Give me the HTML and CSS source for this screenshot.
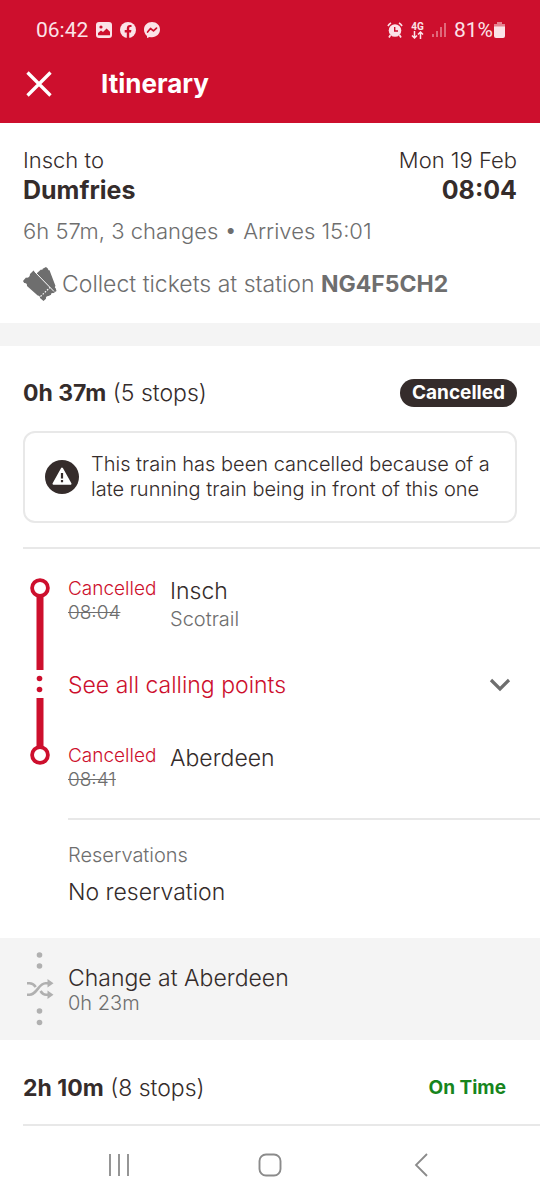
FILE: index.html
```html
<!DOCTYPE html>
<html lang="en">
<head>
<meta charset="utf-8">
<meta name="viewport" content="width=device-width, initial-scale=1">
<title>Itinerary</title>
<link rel="stylesheet" href="styles.css">
</head>
<body>
<header class="top">
  <div class="status">
    <div class="status-group">
      <span>06:42</span>
      <svg class="status-icon" viewBox="0 0 16 16" aria-hidden="true"><rect width="16" height="16" rx="3" fill="#fbe3e8"/><circle cx="5" cy="5" r="1.6" fill="#cd0f2d"/><path d="M2 13.2V11l3-2.5 2 1.6 3.6-3.6L14 9.8v3.4z" fill="#cd0f2d"/></svg>
      <svg class="status-icon" viewBox="0 0 16 16" aria-hidden="true"><circle cx="8" cy="8" r="8" fill="#fbe3e8"/><path d="M6.8 16v-5.6H4.7V8.1h2.1V6.4c0-2.2 1.3-3.4 3.2-3.4.7 0 1.500.1 1.500.1v2h-1c-1 0-1.300.6-1.300 1.300v1.700h2.200l-.4 2.300H9.200V16z" fill="#cd0f2d"/></svg>
      <svg class="status-icon" viewBox="0 0 16 16" aria-hidden="true"><path d="M8 0c4.600 0 8 3.300 8 7.600s-3.400 7.600-8 7.600c-.8 0-1.600-.1-2.300-.3L3 16v-2C1.100 12.500 0 10.200 0 7.600 0 3.300 3.400 0 8 0z" fill="#fbe3e8"/><path d="M3.600 10l2.900-3.500 3 2.300 3-2.700" fill="none" stroke="#cd0f2d" stroke-width="1.700" stroke-linejoin="round" stroke-linecap="round"/></svg>
    </div>
    <div class="status-group">
      <svg class="status-icon" viewBox="0 0 16 16" aria-hidden="true"><path d="M1 4a7 7 0 0 1 3-3M15 4a7 7 0 0 0-3-3M3.500 13L2 15.500M12.500 13l1.500 2.500" stroke="#fbe3e8" stroke-width="1.700" fill="none"/><circle cx="8" cy="8.500" r="6.300" fill="#fbe3e8"/><path d="M7.700 5v4H11" fill="none" stroke="#cd0f2d" stroke-width="1.400"/></svg>
      <span class="network"><span>4G</span>
        <svg class="arrows" viewBox="0 0 13 8" aria-hidden="true"><path d="M3.500 0v7M1 4.500L3.500 7 6 4.500M9.500 8V1M7 3.500L9.500 1 12 3.500" fill="none" stroke="#fbe3e8" stroke-width="1.500"/></svg>
      </span>
      <svg class="signal" viewBox="0 0 14 14" aria-hidden="true"><path d="M1 11v3M5 8v6M9 4v10M13 0v14" stroke="#e5808f" stroke-width="1.600"/></svg>
      <span class="battery"><span>81%</span>
        <svg class="cell" viewBox="0 0 11 16" aria-hidden="true"><path d="M3 0h5v2h3v3H0V2h3z" fill="#e5808f"/><path d="M0 4.500h11V14a2 2 0 0 1-2 2H2a2 2 0 0 1-2-2z" fill="#fbe3e8"/></svg>
      </span>
    </div>
  </div>
  <div class="bar">
    <button class="icon-button" type="button" aria-label="Close"><svg width="26" height="26" viewBox="0 0 26 26" aria-hidden="true"><path d="M1.500 1.500l23 23M24.500 1.500l-23 23" stroke="#fff" stroke-width="3.300"/></svg></button>
    <h1 class="title">Itinerary</h1>
  </div>
</header>

<main>
  <section class="summary">
    <div class="row"><span>Insch to</span><span>Mon 19 Feb</span></div>
    <div class="row strong"><span>Dumfries</span><span>08:04</span></div>
    <p class="duration">6h 57m, 3 changes • Arrives 15:01</p>
    <p class="collect">
      <svg class="tickets" viewBox="0 0 34 34" aria-hidden="true"><path d="M13.500 6.500L18 2.500c.6.700 1.800.2 1.700-.8L23 0l2 1.700c0 1 .5 1.700 1.500 1.500L32.500 19c-.8.6-.8 1.700.2 2.200L33.500 24l-3 2z" fill="#6e6e6e"/><path d="M0 14l3-3.500c1.800.8 4.200-.7 4-3.500L10.500 3.500 31.500 25l-1.500 1.200c-1.300-.4-2.200.4-1.900 1.600L25.500 29c-1.600-.2-3 1-2.500 2.800L20.500 34 17 31c.2-1.400-.8-2.500-2.300-2.500L4 19c.3-2-1-3.300-2.800-3z" fill="#6e6e6e"/><path d="M11.500 4.500L31 24.500" stroke="#fff" stroke-width="1"/><path d="M17.500 29.500L27 20.500" stroke="#fff" stroke-width="1.200" stroke-dasharray="1.600 1.400"/></svg>
      <span>Collect tickets at station <b>NG4F5CH2</b></span>
    </p>
  </section>

  <section class="leg">
    <div class="leg-head">
      <h2><b>0h 37m</b> (5 stops)</h2>
      <span class="pill">Cancelled</span>
    </div>
    <div class="notice" role="alert">
      <svg class="warning" viewBox="0 0 34 34" aria-hidden="true"><circle cx="17" cy="17" r="17" fill="#352c2b"/><path d="M17 8.500l8.500 15.300h-17z" fill="#fff" stroke="#fff" stroke-width="2" stroke-linejoin="round"/><path d="M17 13v5.500M17 20v2.300" stroke="#352c2b" stroke-width="2.200"/></svg>
      <p>This train has been cancelled because of a late running train being in front of this one</p>
    </div>
  </section>

  <section class="journey">
    <svg class="rail" viewBox="0 0 20 188" aria-hidden="true"><path d="M10 16v77M10 121v50" stroke="#cd0f2d" stroke-width="7"/><g fill="#fff" stroke="#cd0f2d" stroke-width="3.800"><circle cx="10" cy="11" r="7.900"/><circle cx="10" cy="178" r="7.900"/></g><g fill="#cd0f2d"><circle cx="9.500" cy="101.500" r="2.800"/><circle cx="9.500" cy="112.500" r="2.800"/></g></svg>
    <div class="stops">
      <div class="stop">
        <div class="when"><span class="late">Cancelled</span><s>08:04</s></div>
        <div class="where"><span>Insch</span><small>Scotrail</small></div>
      </div>
      <button class="expand" type="button" aria-expanded="false"><span>See all calling points</span><svg width="22" height="14" viewBox="0 0 22 14" aria-hidden="true"><path d="M2 2l9 9 9-9" fill="none" stroke="#6e6e6e" stroke-width="3.200"/></svg></button>
      <div class="stop">
        <div class="when"><span class="late">Cancelled</span><s>08:41</s></div>
        <div class="where"><span>Aberdeen</span></div>
      </div>
      <div class="reservations">
        <h3>Reservations</h3>
        <p>No reservation</p>
      </div>
    </div>
  </section>

  <section class="change">
    <svg class="shuffle" viewBox="0 0 28 76" aria-hidden="true"><g fill="#b0b0b0"><circle cx="13.500" cy="4" r="2.800"/><circle cx="13.500" cy="15" r="2.800"/><circle cx="13.500" cy="60" r="2.800"/><circle cx="13.500" cy="71.500" r="2.800"/><path d="M21.500 28l6 4.300-6 4.200zM21.500 39.500l6 4.300-6 4.200z"/></g><path d="M1 32.300h2.500c3.500 0 5 2 6.300 3.700M1 43.800h2.500c7.500 0 9-11.500 16-11.500H23M14.500 40c1.300 2 2.800 3.800 5.500 3.800h3" fill="none" stroke="#b0b0b0" stroke-width="2.600"/></svg>
    <div class="change-text"><span>Change at Aberdeen</span><small>0h 23m</small></div>
  </section>

  <section class="leg-head next">
    <h2><b>2h 10m</b> (8 stops)</h2>
    <span class="on-time">On Time</span>
  </section>
</main>

<nav class="system" aria-label="System">
  <button class="icon-button" type="button" aria-label="Recent apps"><svg width="24" height="24" viewBox="0 0 24 24" aria-hidden="true"><path d="M3 1v22M12 1v22M21 1v22" stroke="#8b8b8b" stroke-width="1.800"/></svg></button>
  <button class="icon-button" type="button" aria-label="Home"><svg width="24" height="24" viewBox="0 0 24 24" aria-hidden="true"><rect x="1.500" y="1.500" width="21" height="21" rx="6.500" fill="none" stroke="#8b8b8b" stroke-width="1.900"/></svg></button>
  <button class="icon-button" type="button" aria-label="Back"><svg width="24" height="24" viewBox="0 0 24 24" aria-hidden="true"><path d="M18 1L7 12l11 11" fill="none" stroke="#8b8b8b" stroke-width="1.800"/></svg></button>
</nav>
</body>
</html>
```
FILE: styles.css
```css
* { box-sizing: border-box; }
body {
  margin: 0;
  background: #fff;
  color: #352c2b;
  font: 300 22px/28px Inter, "Noto Sans", sans-serif;
}
h1, h2, h3, p { margin: 0; font-weight: inherit; font-size: inherit; }
b { font-weight: 700; }
svg { display: block; flex: none; }
button {
  border: 0;
  padding: 0;
  background: none;
  font: inherit;
  color: inherit;
  cursor: pointer;
}

.top { background: #cd0f2d; color: #fff; padding-bottom: 21px; }
.status {
  display: flex;
  justify-content: space-between;
  padding: 18px 35px 0 36px;
  color: #fbe3e8;
  font: 400 21px/24px Roboto, sans-serif;
}
.status-group { display: flex; align-items: center; gap: 8px; }
.status-icon { width: 16px; height: 16px; }
.network {
  display: flex;
  flex-direction: column;
  align-items: center;
  font-size: 10px;
  font-weight: 700;
  line-height: 9px;
}
.arrows { width: 13px; height: 8px; }
.signal { width: 14px; height: 14px; }
.battery { display: flex; align-items: center; gap: 1px; }
.cell { width: 11px; height: 16px; }
.bar { display: flex; align-items: center; gap: 49px; padding: 24px 26px 0; }
.title { font-weight: 700; font-size: 26px; line-height: 36px; }

.summary { padding: 23px 23px 22px; border-bottom: 23px solid #f4f4f4; }
.row { display: flex; justify-content: space-between; }
.strong { font-weight: 700; font-size: 25px; line-height: 32px; }
.duration { margin-top: 11px; color: #6e6e6e; }
.collect { display: flex; align-items: center; gap: 5px; margin-top: 22px; color: #6e6e6e; }
.tickets { width: 34px; height: 34px; }

.leg { margin-left: 23px; padding: 33px 23px 24px 0; border-bottom: 2px solid #e8e8e8; }
.leg-head { display: flex; justify-content: space-between; align-items: center; }
.collect, .leg-head, .stops, .change { font-size: 23px; }
.pill {
  padding: 0 12px;
  border-radius: 14px;
  background: #352c2b;
  color: #fff;
  font-weight: 700;
  font-size: 19px;
}
.notice {
  display: flex;
  align-items: center;
  gap: 12px;
  margin-top: 24px;
  padding: 19px 20px;
  border: 2px solid #e8e8e8;
  border-radius: 12px;
  font-size: 20px;
  line-height: 25px;
}
.warning { width: 34px; height: 34px; }

.journey { display: flex; gap: 18px; padding: 28px 0 32px 30px; }
.rail { width: 20px; height: 188px; }
.stops { flex: 1; }
.stop { display: flex; gap: 12px; }
.when { display: flex; flex-direction: column; width: 90px; font-size: 19px; line-height: 24px; }
.late, .expand { color: #cd0f2d; }
.when s, .where small { color: #6e6e6e; }
.where, .change-text { display: flex; flex-direction: column; }
.where small, .change-text small { font-size: 20px; }
.expand {
  display: flex;
  justify-content: space-between;
  align-items: center;
  width: 100%;
  margin: 26px 0 33px;
  padding: 12px 29px 12px 0;
}
.reservations { margin-top: 26px; padding-top: 23px; border-top: 2px solid #e8e8e8; }
.reservations h3 { color: #6e6e6e; font-size: 20px; line-height: 24px; }
.reservations p { margin-top: 11px; }

.change { display: flex; align-items: center; gap: 14px; padding: 13px 26px; background: #f4f4f4; }
.shuffle { width: 28px; height: 76px; }
.change-text small { color: #6e6e6e; line-height: 22px; }

.next { margin-left: 23px; padding: 34px 34px 22px 0; border-bottom: 2px solid #e8e8e8; }
.on-time { color: #16851d; font-weight: 700; font-size: 19px; }

.system { display: flex; justify-content: space-around; padding: 27px 43px 22px; }
.icon-button { display: flex; align-items: center; justify-content: center; }
```
